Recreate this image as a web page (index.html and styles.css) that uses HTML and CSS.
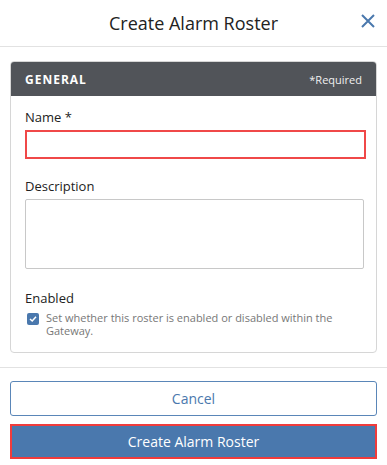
FILE: index.html
```html
<!DOCTYPE html>
<html lang="en">
<head>
    <meta charset="UTF-8">
    <meta name="viewport" content="width=device-width, initial-scale=1.0">
    <title>Create Alarm Roster</title>
    <link rel="stylesheet" href="styles.css">
</head>
<body>
    <div class="modal">
        <div class="modal-header">
            <h1>Create Alarm Roster</h1>
            <button class="close-button" aria-label="Close">
                <svg width="14" height="14" viewBox="0 0 14 14">
                    <path d="M1 1 L13 13 M13 1 L1 13" stroke="#4a78ad" stroke-width="2" fill="none"/>
                </svg>
            </button>
        </div>

        <div class="modal-body">
            <div class="card">
                <div class="card-header">
                    <span class="card-title">GENERAL</span>
                    <span class="required-note">*Required</span>
                </div>
                <div class="card-body">
                    <div class="field name-field">
                        <label for="name">Name *</label>
                        <input type="text" id="name" class="input invalid">
                    </div>
                    <div class="field description-field">
                        <label for="description">Description</label>
                        <textarea id="description" class="input"></textarea>
                    </div>
                    <div class="field enabled-field">
                        <label>Enabled</label>
                        <div class="checkbox-row">
                            <span class="checkbox">
                                <svg width="8" height="8" viewBox="0 0 8 8">
                                    <path d="M1 4 L3.2 6 L7 1.8" stroke="#fff" stroke-width="1.5" fill="none"/>
                                </svg>
                            </span>
                            <span class="checkbox-text">Set whether this roster is enabled or disabled within the Gateway.</span>
                        </div>
                    </div>
                </div>
            </div>
        </div>

        <div class="modal-footer">
            <button class="btn btn-secondary">Cancel</button>
            <button class="btn btn-primary">Create Alarm Roster</button>
        </div>
    </div>
</body>
</html>
```

FILE: styles.css
```css
body {
    margin: 0;
    font-family: 'Open Sans', 'Noto Sans', sans-serif;
    background-color: #fff;
    color: #222;
}
.modal {
    width: 387px;
}
.modal-header {
    position: relative;
    height: 46px;
    border-bottom: 1px solid #e2e2e2;
    display: flex;
    align-items: center;
    justify-content: center;
}
.modal-header h1 {
    margin: 0;
    font-size: 18px;
    font-weight: 400;
    color: #222;
}
.close-button {
    position: absolute;
    right: 12px;
    top: 14px;
    border: none;
    background: none;
    padding: 0;
    width: 14px;
    height: 14px;
    cursor: pointer;
}
.close-button svg {
    display: block;
}
.modal-body {
    padding: 14px 10px 14px 10px;
}
.card {
    border: 1px solid #d6d6d6;
    border-radius: 4px;
    overflow: hidden;
}
.card-header {
    background-color: #515459;
    height: 34px;
    display: flex;
    align-items: center;
    justify-content: space-between;
    padding: 0 14px;
    color: #fff;
}
.card-title {
    font-size: 12px;
    font-weight: 700;
    letter-spacing: 1px;
}
.required-note {
    font-size: 11px;
    color: #f0f0f0;
}
.card-body {
    padding: 12px 10px 15px 14px;
}
.field {
    display: flex;
    flex-direction: column;
}
.field label {
    font-size: 13px;
    color: #222;
    margin-bottom: 4px;
}
.name-field {
    margin-bottom: 18px;
}
.description-field {
    margin-bottom: 20px;
}
.input {
    box-sizing: border-box;
    border: 1px solid #c8c8c8;
    border-radius: 2px;
    font-family: inherit;
    font-size: 13px;
    width: 339px;
}
input.input {
    height: 29px;
}
textarea.input {
    height: 70px;
    resize: none;
    margin: 0;
}
.input.invalid {
    border: 2.5px solid #f04848;
    border-radius: 0;
    width: 341px;
    height: 29px;
}
.checkbox-row {
    display: flex;
    align-items: flex-start;
    gap: 7px;
    padding-left: 2px;
}
.checkbox {
    flex-shrink: 0;
    width: 12px;
    height: 12px;
    background-color: #4a78ad;
    border-radius: 2px;
    display: flex;
    align-items: center;
    justify-content: center;
    margin-top: 2px;
}
.checkbox svg {
    display: block;
}
.checkbox-text {
    font-size: 11px;
    line-height: 13px;
    color: #777;
    width: 300px;
}
.modal-footer {
    border-top: 1px solid #e2e2e2;
    padding: 13px 10px 0 10px;
    display: flex;
    flex-direction: column;
    gap: 8px;
}
.btn {
    font-family: inherit;
    font-size: 14px;
    width: 100%;
    cursor: pointer;
}
.btn-secondary {
    height: 35px;
    background-color: #fff;
    color: #4a78ad;
    border: 1px solid #5a86b8;
    border-radius: 3px;
}
.btn-primary {
    height: 35px;
    background-color: #4a78ad;
    color: #fff;
    border: 2px solid #f03c3c;
    border-radius: 0;
}
```
